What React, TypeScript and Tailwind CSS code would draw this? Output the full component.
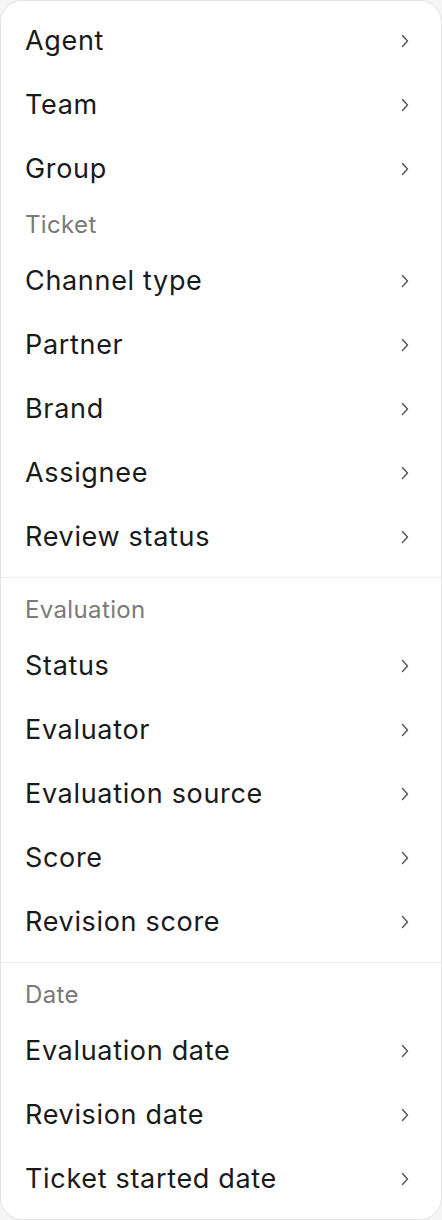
import React from "react";

type Section = { title?: string; items: string[] };

const sections: Section[][] = [
  [
    { items: ["Agent", "Team", "Group"] },
    {
      title: "Ticket",
      items: ["Channel type", "Partner", "Brand", "Assignee", "Review status"],
    },
  ],
  [
    {
      title: "Evaluation",
      items: ["Status", "Evaluator", "Evaluation source", "Score", "Revision score"],
    },
  ],
  [
    {
      title: "Date",
      items: ["Evaluation date", "Revision date", "Ticket started date"],
    },
  ],
];

function Chevron() {
  return (
    <svg width="8" height="14" viewBox="0 0 8 14" fill="none" className="text-[#5a5a5a]">
      <path d="M1.5 1.5 L6.5 7 L1.5 12.5" stroke="currentColor" strokeWidth="1.5" strokeLinecap="round" strokeLinejoin="round" />
    </svg>
  );
}

export default function App() {
  return (
    <div className="min-h-[1220px] w-[442px] bg-[#f5f5f5] font-['Inter','Noto_Sans',sans-serif]">
      <div className="flex h-[1220px] flex-col divide-y divide-[#ececec] overflow-hidden rounded-[22px] border border-[#e2e2e2] bg-white">
        {sections.map((group, gi) => (
          <div key={gi} className="py-2">
            {group.map((section, si) => (
              <div key={si}>
                {section.title && (
                  <div className="flex h-12 items-center px-[24px] text-[24px] tracking-[0.015em] text-[#7a7a7a]">
                    {section.title}
                  </div>
                )}
                {section.items.map((item) => (
                  <div
                    key={item}
                    className="flex h-16 items-center justify-between pl-[24px] pr-[32px] text-[27px] tracking-[0.025em] text-[#1a1a1a]"
                  >
                    <span>{item}</span>
                    <Chevron />
                  </div>
                ))}
              </div>
            ))}
          </div>
        ))}
      </div>
    </div>
  );
}
